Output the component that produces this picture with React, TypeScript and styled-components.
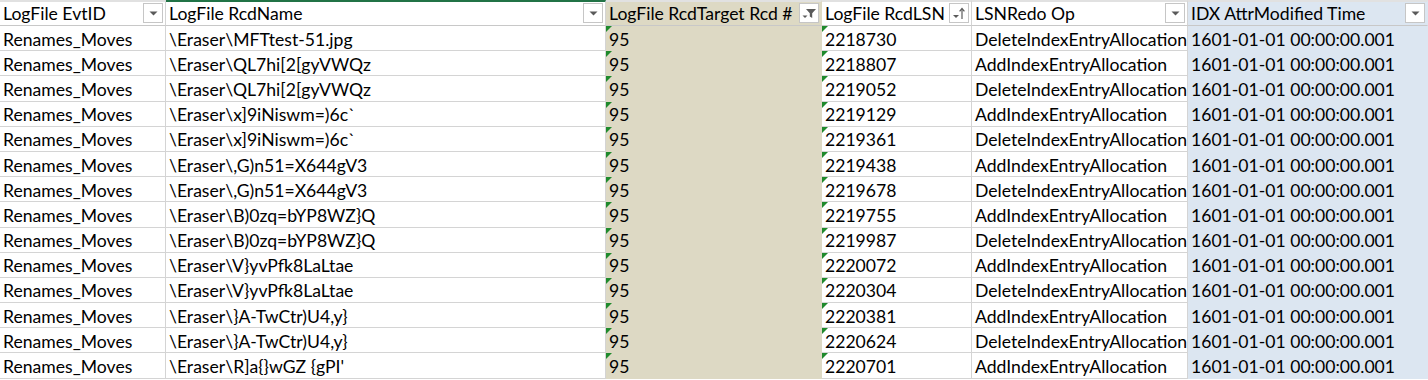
import React from 'react'
import styled, { createGlobalStyle } from 'styled-components'

const GlobalStyle = createGlobalStyle`
  html, body {
    margin: 0;
    padding: 0;
    background: #ffffff;
  }
  body {
    font-family: 'Lato', 'Liberation Sans', sans-serif;
    color: #000;
  }
`

const TAN = '#ddd9c4'
const BLUE = '#dce6f1'
const GRID = '#d4d4d4'

const COLS = [166, 440, 216, 150, 216, 240]

const Sheet = styled.div`
  width: 1428px;
  height: 380px;
  overflow: hidden;
  display: grid;
  grid-template-columns: ${COLS.map((w) => `${w}px`).join(' ')};
  grid-template-rows: 26px;
  grid-auto-rows: 25.2px;
  font-size: 17.6px;
`

const HeaderCell = styled.div<{ $fill?: string; $selected?: boolean }>`
  position: relative;
  display: flex;
  align-items: center;
  justify-content: space-between;
  padding: 0 2px 1px 3px;
  background: ${(p) => p.$fill || '#fff'};
  border-top: 2px solid ${(p) => (p.$selected ? '#217346' : '#e1e1e1')};
  border-bottom: 1px solid #c8c8c8;
  border-right: 1px solid ${(p) => (p.$fill ? p.$fill : GRID)};
  white-space: nowrap;
  box-sizing: border-box;
`

const Cell = styled.div<{ $fill?: string; $mark?: boolean }>`
  position: relative;
  display: flex;
  align-items: center;
  padding: 2px 0 0 3px;
  background: ${(p) => p.$fill || '#fff'};
  border-bottom: 1px solid ${(p) => (p.$fill ? p.$fill : GRID)};
  border-right: 1px solid ${(p) => (p.$fill ? p.$fill : GRID)};
  white-space: nowrap;
  overflow: visible;
  box-sizing: border-box;

  &::before {
    content: '';
    display: ${(p) => (p.$mark ? 'block' : 'none')};
    position: absolute;
    left: 0;
    top: 0;
    border-top: 6px solid #1f8a2c;
    border-right: 6px solid transparent;
  }
`

const FilterButton = styled.span`
  display: flex;
  align-items: center;
  justify-content: center;
  width: 20px;
  height: 20px;
  background: #fff;
  border: 1px solid #c6c6c6;
  box-sizing: border-box;
  flex: none;
`

const DropIcon = () => (
  <svg width="9" height="5" viewBox="0 0 9 5">
    <path d="M0.5 0.5 H8.5 L4.5 4.5 Z" fill="#5a5a5a" />
  </svg>
)

const FunnelIcon = () => (
  <svg width="15" height="11" viewBox="0 0 15 11">
    <path d="M4 1 H14 L10.2 5.2 V10 L7.8 8.6 V5.2 Z" fill="#5a5a5a" />
    <path d="M0.5 7.5 H5.5 L3 10 Z" fill="#5a5a5a" />
  </svg>
)

const SortIcon = () => (
  <svg width="14" height="13" viewBox="0 0 14 13">
    <path d="M1 8 H7 L4 11 Z" fill="#5a5a5a" />
    <path d="M10 12 V2" stroke="#5a5a5a" strokeWidth="1.2" />
    <path d="M7.6 4.4 L10 1.5 L12.4 4.4" stroke="#5a5a5a" strokeWidth="1.2" fill="none" />
  </svg>
)

type Head = { title: string; fill?: string; icon: 'drop' | 'funnel' | 'sort'; selected?: boolean }

const headers: Head[] = [
  { title: 'LogFile EvtID', icon: 'drop' },
  { title: 'LogFile RcdName', icon: 'drop', selected: true },
  { title: 'LogFile RcdTarget Rcd #', icon: 'funnel', fill: TAN },
  { title: 'LogFile RcdLSN', icon: 'sort' },
  { title: 'LSNRedo Op', icon: 'drop' },
  { title: 'IDX AttrModified Time', icon: 'drop', fill: BLUE },
]

const rows: [string, string][] = [
  ['\\Eraser\\MFTtest-51.jpg', '2218730'],
  ['\\Eraser\\QL7hi[2[gyVWQz', '2218807'],
  ['\\Eraser\\QL7hi[2[gyVWQz', '2219052'],
  ['\\Eraser\\x]9iNiswm=)6c`', '2219129'],
  ['\\Eraser\\x]9iNiswm=)6c`', '2219361'],
  ['\\Eraser\\,G)n51=X644gV3', '2219438'],
  ['\\Eraser\\,G)n51=X644gV3', '2219678'],
  ['\\Eraser\\B)0zq=bYP8WZ}Q', '2219755'],
  ['\\Eraser\\B)0zq=bYP8WZ}Q', '2219987'],
  ['\\Eraser\\V}yvPfk8LaLtae', '2220072'],
  ['\\Eraser\\V}yvPfk8LaLtae', '2220304'],
  ['\\Eraser\\}A-TwCtr)U4,y}', '2220381'],
  ['\\Eraser\\}A-TwCtr)U4,y}', '2220624'],
  ["\\Eraser\\R]a{}wGZ {gPI'", '2220701'],
]

export default function App() {
  return (
    <>
      <GlobalStyle />
      <Sheet>
        {headers.map((h) => (
          <HeaderCell key={h.title} $fill={h.fill} $selected={h.selected}>
            <span>{h.title}</span>
            <FilterButton>
              {h.icon === 'drop' && <DropIcon />}
              {h.icon === 'funnel' && <FunnelIcon />}
              {h.icon === 'sort' && <SortIcon />}
            </FilterButton>
          </HeaderCell>
        ))}
        {rows.map(([name, lsn], i) => (
          <React.Fragment key={lsn}>
            <Cell>Renames_Moves</Cell>
            <Cell>{name}</Cell>
            <Cell $fill={TAN} $mark>
              95
            </Cell>
            <Cell $mark>{lsn}</Cell>
            <Cell>{i % 2 === 0 ? 'DeleteIndexEntryAllocation' : 'AddIndexEntryAllocation'}</Cell>
            <Cell $fill={BLUE}>1601-01-01 00:00:00.001</Cell>
          </React.Fragment>
        ))}
      </Sheet>
    </>
  )
}
